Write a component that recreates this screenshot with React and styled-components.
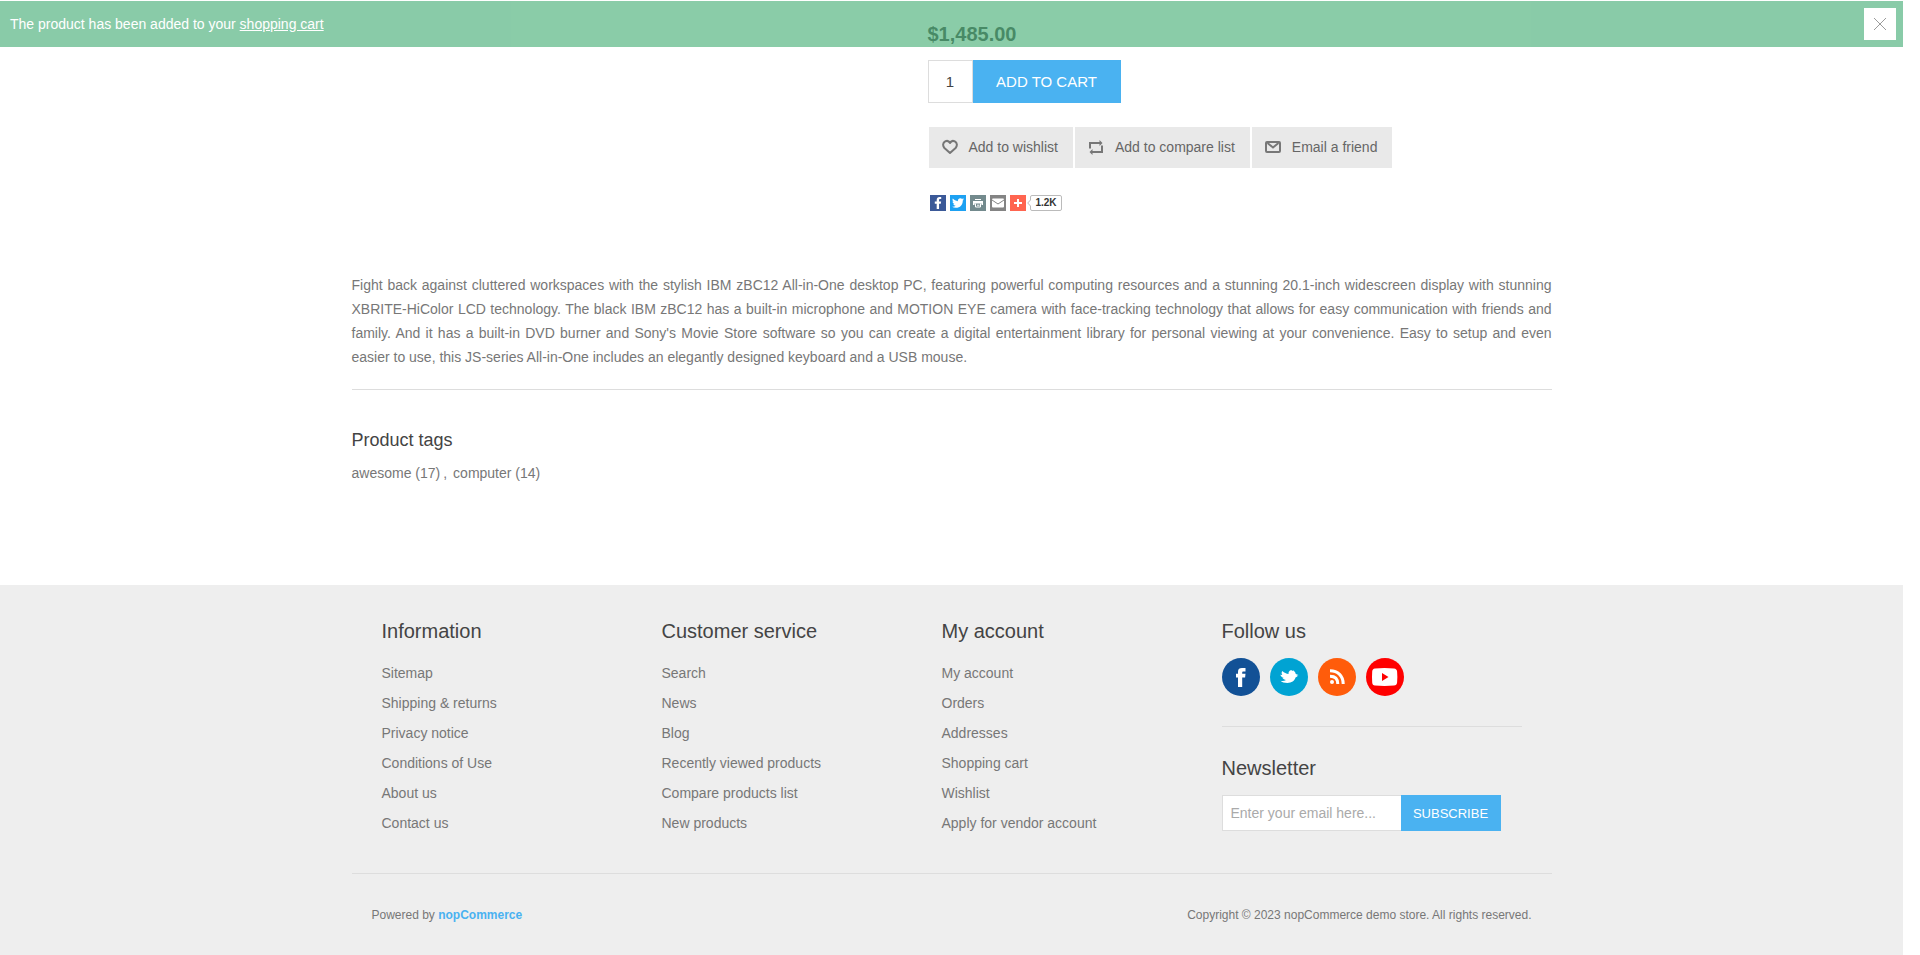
import React, { useState } from "react";
import styled, { createGlobalStyle } from "styled-components";
import { FaFacebookF, FaTwitter } from "react-icons/fa";

const GlobalStyle = createGlobalStyle`
  *, *::before, *::after { box-sizing: border-box; }
  body {
    margin: 0;
    background: #fff;
    color: #777;
    font: 14px/24px "Liberation Sans", Arial, sans-serif;
  }
  h2, p, ul { margin: 0; padding: 0; font-weight: normal; }
  ul { list-style: none; }
  a { color: inherit; text-decoration: none; }
  button, input { font-family: inherit; border-radius: 0; }
`;

const Page = styled.div`
  display: flex;
  flex-direction: column;
  min-height: 100vh;
  margin-right: 17px;
`;

const Notification = styled.div`
  position: fixed;
  top: 1px;
  left: 0;
  right: 17px;
  z-index: 10;
  display: flex;
  align-items: center;
  justify-content: space-between;
  height: 46px;
  padding: 0 7px 0 10px;
  background: #4bb07a;
  color: #fff;
  opacity: 0.65;
  a { text-decoration: underline; }
`;

const CloseButton = styled.button`
  display: flex;
  align-items: center;
  justify-content: center;
  width: 32px;
  height: 32px;
  padding: 0;
  border: 0;
  background: #fff;
  color: #666;
  cursor: pointer;
`;

const Container = styled.div`
  width: 100%;
  max-width: 1200px;
  margin: 0 auto;
`;

const Main = styled.main`
  flex: 1 0 auto;
  padding: 22px 0 100px;
`;

const Overview = styled.section`
  width: 52%;
  margin-left: auto;
`;

const Price = styled.p`
  margin-bottom: 14px;
  color: #444;
  font-size: 20px;
  font-weight: bold;
`;

const AddToCart = styled.form`
  display: flex;
  margin-bottom: 24px;
`;

const QuantityInput = styled.input`
  width: 45px;
  height: 43px;
  padding: 0;
  border: 1px solid #ddd;
  background: #fff;
  color: #444;
  font-size: 15px;
  text-align: center;
`;

const PrimaryButton = styled.button`
  width: ${(p) => p.$width}px;
  height: ${(p) => p.$height}px;
  padding: 0;
  border: 0;
  background: #4ab2f1;
  color: #fff;
  font-size: ${(p) => p.$size}px;
  text-transform: uppercase;
  cursor: pointer;
`;

const Actions = styled.div`
  display: flex;
  gap: 2px;
  padding-left: 1px;
  margin-bottom: 27px;
`;

const ActionButton = styled.button`
  display: flex;
  align-items: center;
  gap: 11px;
  height: 41px;
  padding: 0 15px 1px 13px;
  border: 0;
  background: #e9e9e9;
  color: #666;
  font-size: 14px;
  cursor: pointer;
  svg { color: #777; }
`;

const Share = styled.div`
  display: flex;
  align-items: center;
  gap: 4px;
  padding-left: 2px;
  margin-bottom: 62px;
`;

const ShareLink = styled.a`
  display: flex;
  align-items: center;
  justify-content: center;
  width: 16px;
  height: 16px;
  background: ${(p) => p.$color};
  color: #fff;
`;

const ShareMore = styled.div`
  display: flex;
  gap: 1px;
`;

const ShareCount = styled.span`
  display: grid;
  width: 35px;
  height: 16px;
  color: #333;
  font-size: 10px;
  font-weight: bold;
  line-height: 16px;
  > * { grid-area: 1 / 1; }
  span { padding-left: 4px; text-align: center; }
`;

const Description = styled.p`
  padding-bottom: 20px;
  border-bottom: 1px solid #ddd;
  margin-bottom: 38px;
  text-align: justify;
`;

const Title = styled.h2`
  color: #444;
  font-size: ${(p) => p.$size}px;
  line-height: 24px;
  margin-bottom: ${(p) => p.$gap}px;
`;

const TagList = styled.ul`
  display: flex;
  gap: 6px;
  li { display: flex; gap: 3px; }
`;

const Footer = styled.footer`
  background: #eee;
`;

const FooterUpper = styled.div`
  display: grid;
  grid-template-columns: 14fr 14fr 14fr 15fr;
  padding: 34px 30px 35px;
  border-bottom: 1px solid #ddd;
`;

const LinkList = styled.ul`
  line-height: 30px;
`;

const Social = styled.div`
  display: flex;
  gap: 10px;
  padding-bottom: 30px;
  border-bottom: 1px solid #ddd;
  margin-bottom: 29px;
`;

const SocialLink = styled.a`
  width: 38px;
  height: 38px;
  border-radius: 50%;
  background: ${(p) => p.$color};
  svg { display: block; }
`;

const NewsletterForm = styled.form`
  display: flex;
`;

const EmailInput = styled.input`
  width: 179px;
  height: 36px;
  padding: 0 8px;
  border: 1px solid #ddd;
  border-right: 0;
  background: #fff;
  color: #777;
  font-size: 14px;
  &::placeholder { color: #aaa; opacity: 1; }
`;

const FooterLower = styled.div`
  display: flex;
  justify-content: space-between;
  padding: 29px 20px 28px;
  font-size: 12px;
  a { color: #4ab2f1; font-weight: bold; }
`;

const CloseIcon = () => (
  <svg width="12" height="12" viewBox="0 0 12 12" stroke="currentColor" fill="none" aria-hidden="true">
    <path d="M0 0L12 12M12 0L0 12" />
  </svg>
);

const HeartIcon = () => (
  <svg width="16" height="16" viewBox="0 0 16 16" fill="none" stroke="currentColor" strokeWidth="2" aria-hidden="true">
    <path d="M8 3.900C6.800 1.800 4.700 1.600 3.200 2.400C.7 3.800.5 6.800 2.400 9L8 14L13.600 9C15.500 6.800 15.300 3.800 12.800 2.400C11.300 1.600 9.200 1.800 8 3.900Z" strokeLinejoin="round" />
  </svg>
);

const CompareIcon = () => (
  <svg width="16" height="16" viewBox="0 0 16 16" fill="none" stroke="currentColor" strokeWidth="2" aria-hidden="true">
    <path d="M2 9.500V4H12M14 6.500V13H4" />
    <path d="M11.500 1L14.500 4L11.500 7ZM4.500 10L1.500 13L4.500 16Z" fill="currentColor" stroke="none" />
  </svg>
);

const EnvelopeIcon = () => (
  <svg width="16" height="16" viewBox="0 0 16 16" fill="none" stroke="currentColor" strokeWidth="2" aria-hidden="true">
    <rect x="1" y="3" width="14" height="10" rx="1" />
    <path d="M2.500 4L8 8.500L13.500 4" />
  </svg>
);

const PrintIcon = () => (
  <svg width="12" height="12" viewBox="0 0 12 12" fill="none" stroke="currentColor" aria-hidden="true">
    <path d="M3 2.500H9" />
    <path d="M1 4H11V8H9.500V6.500H2.500V8H1Z" fill="currentColor" stroke="none" />
    <path d="M3.500 6.500V10H8.500V6.500M5 8.200H7.500" />
  </svg>
);

const MailIcon = () => (
  <svg width="12" height="12" viewBox="0 0 12 12" aria-hidden="true">
    <rect y="1.500" width="12" height="9" rx="1" fill="currentColor" />
    <path d="M0 3L6 7L12 3" fill="none" stroke="#848484" />
  </svg>
);

const PlusIcon = () => (
  <svg width="8" height="8" viewBox="0 0 8 8" stroke="currentColor" strokeWidth="2" aria-hidden="true">
    <path d="M4 0V8M0 4H8" />
  </svg>
);

const BubbleOutline = () => (
  <svg width="35" height="16" viewBox="0 0 35 16" fill="#fff" stroke="#bbb" aria-hidden="true">
    <path d="M5 .5H33Q34.500 .5 34.500 2V14Q34.500 15.500 33 15.500H5Q3.500 15.500 3.500 14V11L.7 8L3.500 5V2Q3.500 .5 5 .5Z" />
  </svg>
);

const FacebookMark = () => (
  <svg width="38" height="38" viewBox="0 0 38 38" fill="#fff" aria-hidden="true">
    <path d="M16 29V19.500H14V15.800H16V13.700C16 11 17.500 10 20 10H23.500V13.600H21.500C20.500 13.600 20.200 14 20.200 14.800V15.800H23.500L23.100 19.500H20.200V29Z" />
  </svg>
);

const TwitterMark = () => (
  <svg width="38" height="38" viewBox="0 0 38 38" fill="#fff" aria-hidden="true">
    <path d="M12.300 13C14.200 15 16.400 15.600 18.600 16.100C18.200 14.400 19 13.300 20 12.500L21.500 12L22 13L23.500 12.200L23.700 13.100C25 13.900 25.500 14.800 25.700 16L28.500 17L26.300 18L27.800 18.300L25.500 19.600C24.600 23 21.500 25 17.500 25C14.400 25 12 24.300 10.500 22.800C12.500 23.200 14.500 23 16 22C14.500 21.700 13.200 21.100 12.500 20.200L13.800 20C12 19.300 10.800 18.300 10.300 16.700L12.300 16.900C11.300 15.500 11.500 14.100 12.300 13Z" />
  </svg>
);

const RssMark = () => (
  <svg width="38" height="38" viewBox="0 0 38 38" fill="none" stroke="#fff" strokeWidth="3" aria-hidden="true">
    <circle cx="14" cy="24" r="2" fill="#fff" stroke="none" />
    <path d="M12 18.200C17 18.200 19.800 21 19.800 26M12 12.800C20 12.800 25.200 18 25.200 26" />
  </svg>
);

const YoutubeMark = () => (
  <svg width="38" height="38" viewBox="0 0 38 38" aria-hidden="true">
    <path d="M9 10.400Q18.500 9.600 28 10.400Q30.800 10.600 31.100 13.500Q31.600 19 31.100 24.500Q30.800 27.400 28 27.600Q18.500 28.400 9 27.600Q6.400 27.400 6.200 24.500Q5.800 19 6.200 13.500Q6.400 10.600 9 10.400Z" fill="#fff" />
    <path d="M16 15L22.500 19L16 23Z" fill="#f00" />
  </svg>
);

const footerColumns = [
  { title: "Information", links: ["Sitemap", "Shipping & returns", "Privacy notice", "Conditions of Use", "About us", "Contact us"] },
  { title: "Customer service", links: ["Search", "News", "Blog", "Recently viewed products", "Compare products list", "New products"] },
  { title: "My account", links: ["My account", "Orders", "Addresses", "Shopping cart", "Wishlist", "Apply for vendor account"] },
];

const socialLinks = [
  { name: "Facebook", color: "#125196", Mark: FacebookMark },
  { name: "Twitter", color: "#00a3d3", Mark: TwitterMark },
  { name: "RSS", color: "#ff5c0b", Mark: RssMark },
  { name: "YouTube", color: "#f00", Mark: YoutubeMark },
];

export default function App() {
  const [notified, setNotified] = useState(true);
  const stop = (e) => e.preventDefault();

  return (
    <Page>
      <GlobalStyle />
      {notified && (
        <Notification role="status">
          <p>The product has been added to your <a href="#cart">shopping cart</a></p>
          <CloseButton type="button" aria-label="Close" onClick={() => setNotified(false)}>
            <CloseIcon />
          </CloseButton>
        </Notification>
      )}

      <Main>
        <Container>
          <Overview>
            <Price>$1,485.00</Price>
            <AddToCart onSubmit={stop}>
              <QuantityInput type="text" aria-label="Enter a quantity" defaultValue="1" />
              <PrimaryButton type="submit" $width={148} $height={43} $size={15}>Add to cart</PrimaryButton>
            </AddToCart>
            <Actions>
              <ActionButton type="button"><HeartIcon />Add to wishlist</ActionButton>
              <ActionButton type="button"><CompareIcon />Add to compare list</ActionButton>
              <ActionButton type="button"><EnvelopeIcon />Email a friend</ActionButton>
            </Actions>
            <Share>
              <ShareLink href="#facebook" aria-label="Share on Facebook" $color="#3b5998"><FaFacebookF size={12} /></ShareLink>
              <ShareLink href="#twitter" aria-label="Share on Twitter" $color="#1da1f2"><FaTwitter size={12} /></ShareLink>
              <ShareLink href="#print" aria-label="Print" $color="#738a8d"><PrintIcon /></ShareLink>
              <ShareLink href="#email" aria-label="Share by email" $color="#848484"><MailIcon /></ShareLink>
              <ShareMore>
                <ShareLink href="#more" aria-label="More ways to share" $color="#ff6550"><PlusIcon /></ShareLink>
                <ShareCount><BubbleOutline /><span>1.2K</span></ShareCount>
              </ShareMore>
            </Share>
          </Overview>

          <Description>
            Fight back against cluttered workspaces with the stylish IBM zBC12 All-in-One desktop PC, featuring powerful
            computing resources and a stunning 20.1-inch widescreen display with stunning XBRITE-HiColor LCD technology.
            The black IBM zBC12 has a built-in microphone and MOTION EYE camera with face-tracking technology that allows
            for easy communication with friends and family. And it has a built-in DVD burner and Sony's Movie Store
            software so you can create a digital entertainment library for personal viewing at your convenience. Easy to
            setup and even easier&nbsp;to use, this JS-series All-in-One includes an elegantly designed keyboard and a USB mouse.
          </Description>

          <Title $size={18} $gap={9}>Product tags</Title>
          <TagList>
            <li><a href="#awesome">awesome (17)</a><span>,</span></li>
            <li><a href="#computer">computer (14)</a></li>
          </TagList>
        </Container>
      </Main>

      <Footer>
        <Container>
          <FooterUpper>
            {footerColumns.map(({ title, links }) => (
              <nav key={title} aria-label={title}>
                <Title $size={20} $gap={15}>{title}</Title>
                <LinkList>
                  {links.map((link) => (
                    <li key={link}><a href="#page">{link}</a></li>
                  ))}
                </LinkList>
              </nav>
            ))}
            <div>
              <Title $size={20} $gap={15}>Follow us</Title>
              <Social>
                {socialLinks.map(({ name, color, Mark }) => (
                  <SocialLink key={name} href="#social" aria-label={name} $color={color}><Mark /></SocialLink>
                ))}
              </Social>
              <Title $size={20} $gap={15}>Newsletter</Title>
              <NewsletterForm onSubmit={stop}>
                <EmailInput type="email" aria-label="Sign up for our newsletter" placeholder="Enter your email here..." />
                <PrimaryButton type="submit" $width={100} $height={36} $size={13}>Subscribe</PrimaryButton>
              </NewsletterForm>
            </div>
          </FooterUpper>
          <FooterLower>
            <span>Powered by <a href="#nopcommerce">nopCommerce</a></span>
            <span>Copyright © 2023 nopCommerce demo store. All rights reserved.</span>
          </FooterLower>
        </Container>
      </Footer>
    </Page>
  );
}
